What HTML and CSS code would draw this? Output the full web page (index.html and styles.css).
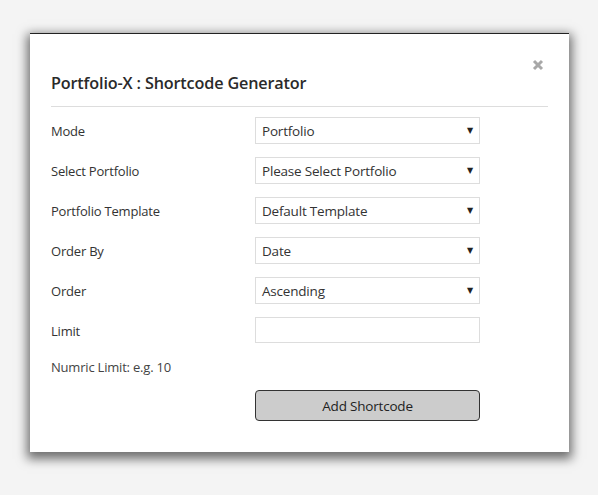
FILE: index.html
```html
<!DOCTYPE html>
<html>
<head>
<meta charset="utf-8">
<link rel="stylesheet" href="styles.css">
</head>
<body>
<div class="modal">
  <div class="header">
    <h2 class="title">Portfolio-X : Shortcode Generator</h2>
    <svg class="close" width="12" height="12" viewBox="0 0 12 12"><path d="M2 2 L10 10 M10 2 L2 10" stroke="#a8a8a8" stroke-width="3" stroke-linecap="butt"/></svg>
  </div>
  <div class="form">
    <label class="lbl">Mode</label>
    <div class="select"><span>Portfolio</span><span class="arrow">&#9660;</span></div>
    <label class="lbl">Select Portfolio</label>
    <div class="select"><span>Please Select Portfolio</span><span class="arrow">&#9660;</span></div>
    <label class="lbl">Portfolio Template</label>
    <div class="select"><span>Default Template</span><span class="arrow">&#9660;</span></div>
    <label class="lbl">Order By</label>
    <div class="select"><span>Date</span><span class="arrow">&#9660;</span></div>
    <label class="lbl">Order</label>
    <div class="select"><span>Ascending</span><span class="arrow">&#9660;</span></div>
    <label class="lbl">Limit</label>
    <div class="input"></div>
    <div class="hint">Numric Limit: e.g. 10</div>
    <div class="empty"></div>
    <div class="empty"></div>
    <button class="btn">Add Shortcode</button>
  </div>
</div>
</body>
</html>
```
FILE: styles.css
```css
html, body {
  margin: 0;
  padding: 0;
  background: #f4f4f4;
  width: 598px;
  height: 495px;
  overflow: hidden;
}
body {
  padding: 33px 0 0 30px;
  box-sizing: border-box;
  font-family: "Open Sans", "Noto Sans", sans-serif;
  color: #333;
}
.modal {
  width: 539px;
  height: 419px;
  background: #fff;
  box-shadow: 0 4px 10px 3px rgba(0,0,0,0.55);
  border-top: 1px solid #222;
  box-sizing: border-box;
  padding: 0 21px;
}
.header {
  position: relative;
  height: 73px;
  border-bottom: 1px solid #ddd;
  box-sizing: border-box;
}
.title {
  margin: 0;
  padding-top: 38px;
  font-size: 16.2px;
  font-weight: 600;
  color: #2a2a2a;
  line-height: 22px;
  letter-spacing: -0.15px;
}
.close {
  position: absolute;
  right: 4px;
  top: 25px;
}
.form {
  display: grid;
  grid-template-columns: 204px 225px;
  grid-template-rows: 27px 27px 27px 27px 27px 27px 20px 31px;
  row-gap: 13px;
  padding-top: 10px;
  font-size: 13px;
}
.lbl {
  display: flex;
  align-items: center;
  color: #333;
  letter-spacing: -0.2px;
}
.select, .input {
  border: 1px solid #ddd;
  box-sizing: border-box;
  display: flex;
  align-items: center;
  justify-content: space-between;
  padding: 0 6px 0 6px;
  color: #333;
  font-size: 13.5px;
  letter-spacing: -0.2px;
}
.input { height: 26px; }
.arrow {
  font-size: 8px;
  color: #222;
  font-family: "DejaVu Sans", sans-serif;
}
.hint {
  display: flex;
  align-items: center;
  color: #444;
  letter-spacing: -0.2px;
}
.btn {
  grid-column: 2;
  height: 31px;
  background: #ccc;
  border: 1px solid #333;
  border-radius: 4px;
  font-family: "Open Sans", "Noto Sans", sans-serif;
  font-size: 13.5px;
  color: #222;
  letter-spacing: -0.2px;
  padding: 0;
}
```
